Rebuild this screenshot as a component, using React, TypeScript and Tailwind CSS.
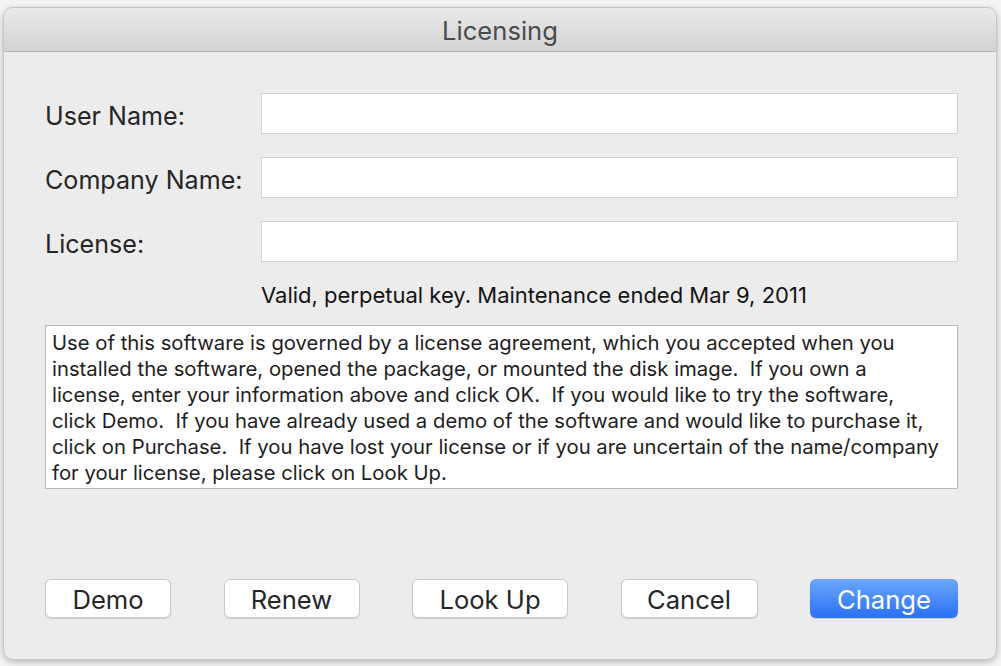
import React from "react";

const sys = { fontFamily: '"Inter", "Liberation Sans", sans-serif' };

function Field({ label }: { label: string }) {
  return (
    <div className="flex items-center h-[41px]">
      <div className="w-[216px] text-[25.1px] text-[#262626] leading-none pt-[6px]">{label}</div>
      <div className="flex-1 h-[41px] bg-white border border-[#d2d2d2]" />
    </div>
  );
}

function Btn({ label, w, primary }: { label: string; w: string; primary?: boolean }) {
  if (primary) {
    return (
      <div
        className={`${w} h-[39px] rounded-[6px] flex items-center justify-center pt-[3px] text-[25.6px] text-white bg-gradient-to-b from-[#6aa7f9] to-[#2b6ef6] shadow-[0_1px_1px_rgba(0,0,0,0.15)]`}
      >
        {label}
      </div>
    );
  }
  return (
    <div
      className={`${w} h-[39px] rounded-[6px] flex items-center justify-center pt-[3px] text-[25.6px] text-[#262626] bg-white border border-[#c8c8c8] shadow-[0_1px_1px_rgba(0,0,0,0.12)]`}
    >
      {label}
    </div>
  );
}

const lines = [
  "Use of this software is governed by a license agreement, which you accepted when you",
  "installed the software, opened the package, or mounted the disk image.\u00a0 If you own a",
  "license, enter your information above and click OK.\u00a0 If you would like to try the software,",
  "click Demo.\u00a0 If you have already used a demo of the software and would like to purchase it,",
  "click on Purchase.\u00a0 If you have lost your license or if you are uncertain of the name/company",
  "for your license, please click on Look Up.",
];

export default function App() {
  return (
    <div className="w-[1001px] h-[666px] bg-[#f4f4f4] pt-[7px] pl-[3px] overflow-hidden" style={sys}>
      <div className="w-[994px] h-[653px] rounded-[10px] bg-[#ececec] border border-[#c6c6c6] shadow-[0_2px_6px_rgba(0,0,0,0.25)] flex flex-col overflow-hidden">
        <div className="h-[44px] shrink-0 bg-gradient-to-b from-[#e9e9e9] to-[#d3d3d3] border-b border-[#b4b4b4] flex items-center justify-center pt-[4px]">
          <span className="text-[25.6px] text-[#4b4b4b]">Licensing</span>
        </div>
        <div className="flex flex-col pl-[41px] pr-[38px] pt-[41px]">
          <div className="flex flex-col gap-[23px]">
            <Field label="User Name:" />
            <Field label="Company Name:" />
            <Field label="License:" />
          </div>
          <div className="pl-[216px] mt-[20px] h-[26px] flex items-center text-[22px] text-[#141414]">
            Valid, perpetual key. Maintenance ended Mar 9, 2011
          </div>
          <div className="mt-[17px] h-[164px] bg-white border border-[#b8b8b8] px-[6px] pt-[4px] text-[20.3px] leading-[26px] text-[#1e1e1e] overflow-hidden">
            {lines.map((l, i) => (
              <div key={i} className="whitespace-nowrap">
                {l}
              </div>
            ))}
          </div>
          <div className="mt-[90px] flex items-center justify-between">
            <Btn label="Demo" w="w-[126px]" />
            <Btn label="Renew" w="w-[136px]" />
            <Btn label="Look Up" w="w-[156px]" />
            <Btn label="Cancel" w="w-[137px]" />
            <Btn label="Change" w="w-[148px]" primary />
          </div>
        </div>
      </div>
    </div>
  );
}
